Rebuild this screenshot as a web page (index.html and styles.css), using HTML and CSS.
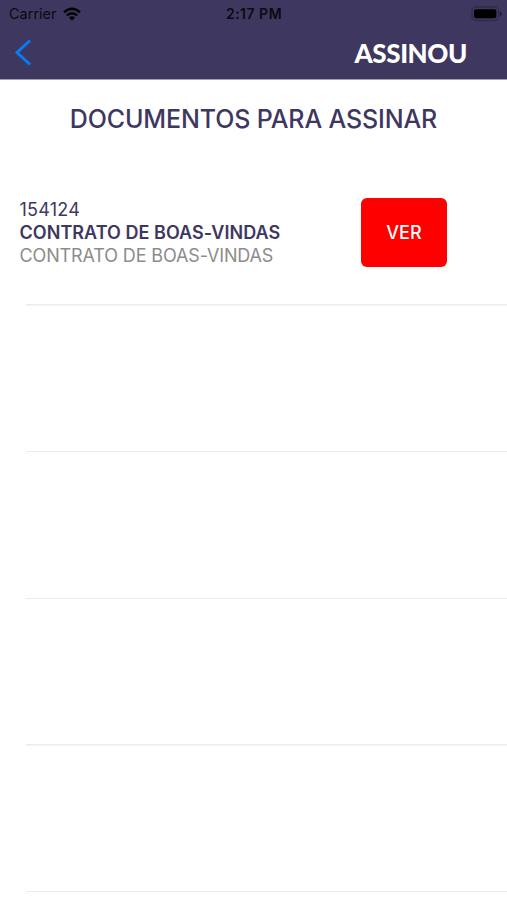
FILE: index.html
```html
<!DOCTYPE html>
<html lang="pt-BR">
<head>
<meta charset="utf-8">
<title>Assinou</title>
<link rel="stylesheet" href="styles.css">
</head>
<body>
<header class="header">
  <div class="status">
    <div class="status-left">
      <span class="carrier">Carrier</span>
      <svg class="wifi" width="18" height="14" viewBox="0 0 18 14">
        <g fill="none" stroke="#000" stroke-width="2.5">
          <path d="M1 5.2Q9 -1.8 17 5.2"/>
          <path d="M3.8 8.4Q9 4 14.2 8.4"/>
        </g>
        <path d="M6 10.5Q9 8.2 12 10.5L9 13.8Z"/>
      </svg>
    </div>
    <span class="clock">2:17 PM</span>
    <svg class="battery" width="32" height="16" viewBox="0 0 32 16">
      <rect x="1" y="1" width="26.5" height="13.5" rx="4" fill="none" stroke="#302a4b" stroke-width="1.3"/>
      <rect x="3" y="3.3" width="22.3" height="9" rx="2" fill="#000"/>
      <path d="M28.8 5.5Q33 8 28.8 10.5Z" fill="#211d35"/>
    </svg>
  </div>
  <nav class="nav">
    <svg class="back" width="18" height="28" viewBox="0 0 18 28">
      <path d="M16 1.5L3 13.5L16 25.5" fill="none" stroke="#087bf5" stroke-width="3"/>
    </svg>
    <span class="logo">ASSINOU</span>
  </nav>
</header>
<main>
  <h1 class="title">DOCUMENTOS PARA ASSINAR</h1>
  <ul class="list">
    <li class="row">
      <div class="doc">
        <div class="number">154124</div>
        <div class="name">CONTRATO DE BOAS-VINDAS</div>
        <div class="description">CONTRATO DE BOAS-VINDAS</div>
      </div>
      <button class="view">VER</button>
    </li>
    <li class="row"></li>
    <li class="row"></li>
    <li class="row"></li>
    <li class="row"></li>
  </ul>
</main>
</body>
</html>
```
FILE: styles.css
```css
* { box-sizing: border-box; }
body {
  margin: 0;
  height: 900px;
  overflow: hidden;
  background: #fff;
  color: #3e375f;
  font-family: Inter, "Liberation Sans", sans-serif;
  white-space: nowrap;
}
.header {
  height: 80px;
  background: #3e375f;
  border-bottom: 1px solid #a19db2;
}
.status {
  display: grid;
  grid-template-columns: 1fr auto 1fr;
  align-items: center;
  height: 27px;
  padding: 0 4px 0 9px;
  color: #0b0a10;
}
.status-left { display: flex; align-items: center; gap: 6px; }
.carrier { font-size: 14.5px; }
.clock { margin-right: 4px; font-size: 14px; font-weight: 600; letter-spacing: 0.5px; }
.battery { justify-self: end; }
.nav {
  display: flex;
  justify-content: space-between;
  align-items: center;
  height: 51px;
  padding: 0 40px 0 14px;
}
.logo {
  color: #fff;
  font: 900 26px/30px Lato, sans-serif;
  letter-spacing: -0.4px;
}
.title {
  margin: 0;
  padding-top: 23px;
  height: 79px;
  font-size: 25px;
  line-height: 32px;
  font-weight: 500;
  letter-spacing: -0.13px;
  text-align: center;
}
.list { margin: 0; padding: 0; list-style: none; }
.row {
  display: flex;
  justify-content: space-between;
  height: 146.7px;
  padding: 39px 60px 0 19.5px;
  background: linear-gradient(#ececee, #ececee) 26px 100% / 100% 1.5px no-repeat;
}
.doc { font-size: 18px; line-height: 23.2px; }
.number { letter-spacing: 0.25px; }
.name { font-weight: 600; letter-spacing: 0.04px; }
.description { color: #8c8c8c; letter-spacing: -0.13px; }
.view {
  width: 86px;
  height: 69px;
  margin: 0;
  padding: 0;
  border: 0;
  border-radius: 6px;
  background: #fe0000;
  color: #fff;
  font: 500 18px Inter, sans-serif;
}
```
